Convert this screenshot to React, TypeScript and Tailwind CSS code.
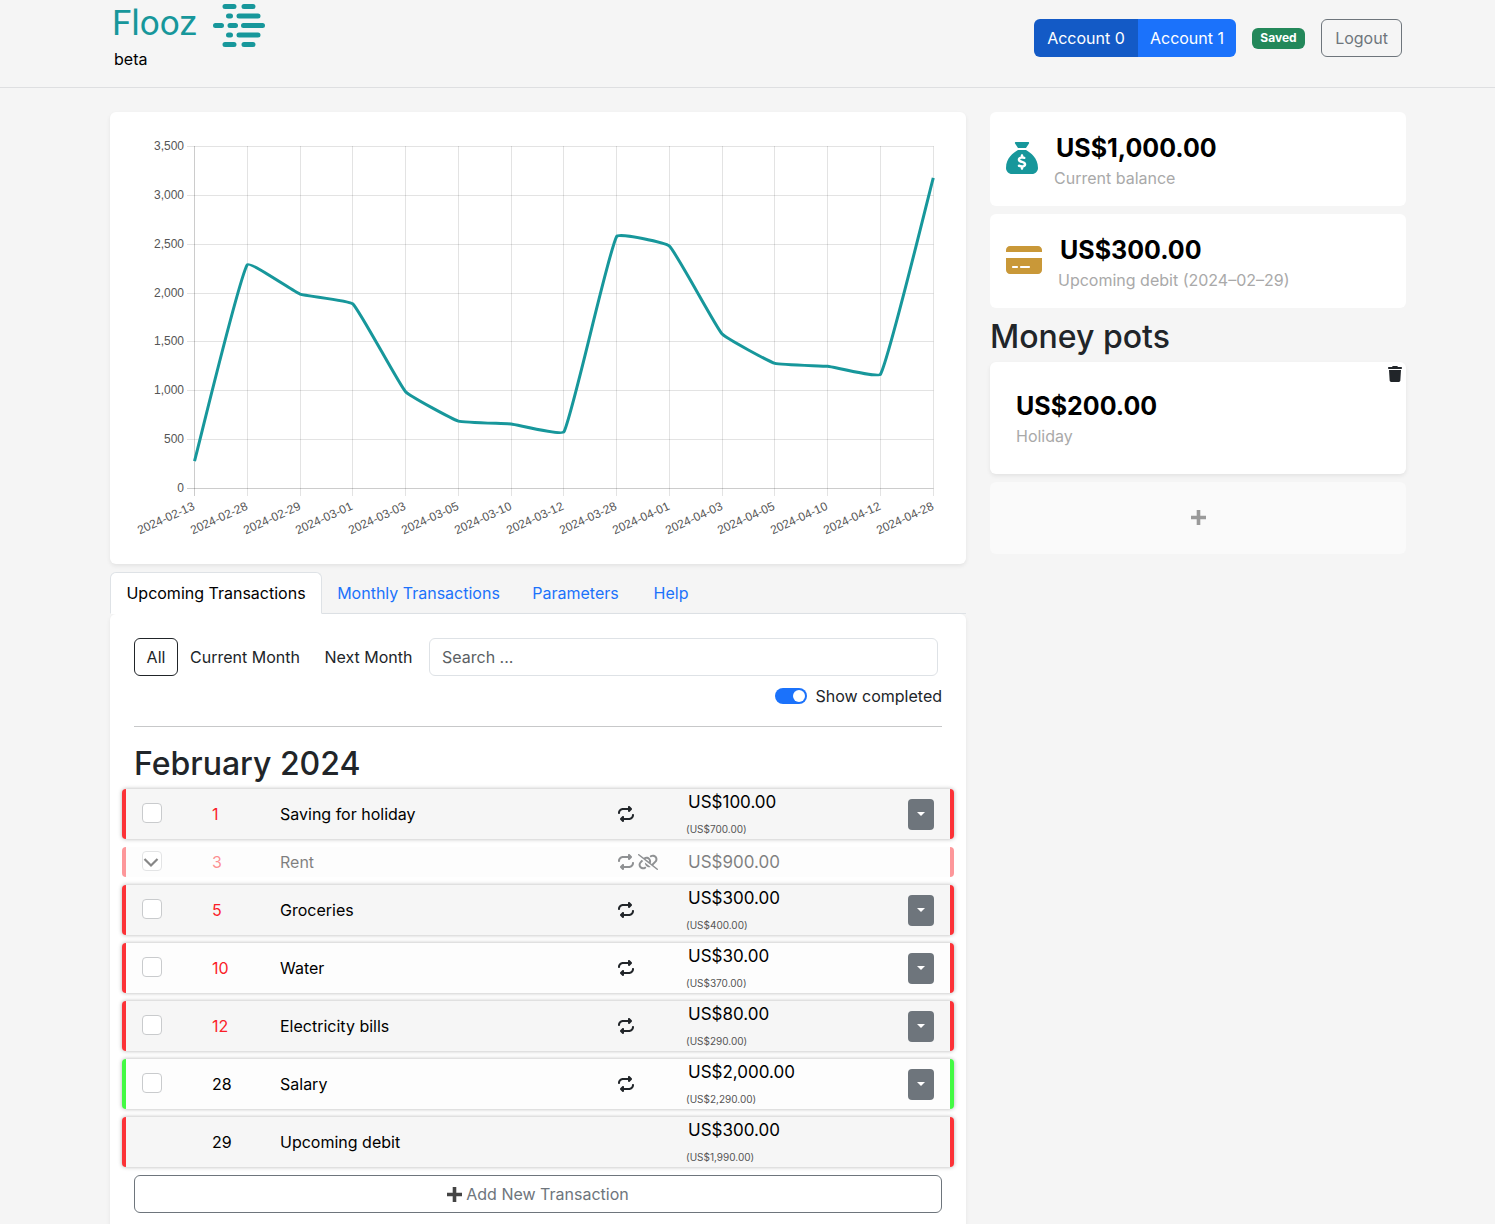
import { useState } from 'react'
import { FaCreditCard, FaLinkSlash, FaRepeat, FaSackDollar, FaTrash } from 'react-icons/fa6'

const points = [
  { date: '2024-02-13', balance: 280 },
  { date: '2024-02-28', balance: 2290 },
  { date: '2024-02-29', balance: 1990 },
  { date: '2024-03-01', balance: 1890 },
  { date: '2024-03-03', balance: 990 },
  { date: '2024-03-05', balance: 690 },
  { date: '2024-03-10', balance: 660 },
  { date: '2024-03-12', balance: 580 },
  { date: '2024-03-28', balance: 2580 },
  { date: '2024-04-01', balance: 2480 },
  { date: '2024-04-03', balance: 1580 },
  { date: '2024-04-05', balance: 1280 },
  { date: '2024-04-10', balance: 1250 },
  { date: '2024-04-12', balance: 1170 },
  { date: '2024-04-28', balance: 3180 },
]

type Transaction = {
  day: number
  name: string
  amount: string
  balance?: string
  late?: boolean
  income?: boolean
  completed?: boolean
  fixed?: boolean
}

const transactions: Transaction[] = [
  { day: 1, name: 'Saving for holiday', amount: 'US$100.00', balance: '(US$700.00)', late: true },
  { day: 3, name: 'Rent', amount: 'US$900.00', late: true, completed: true },
  { day: 5, name: 'Groceries', amount: 'US$300.00', balance: '(US$400.00)', late: true },
  { day: 10, name: 'Water', amount: 'US$30.00', balance: '(US$370.00)', late: true },
  { day: 12, name: 'Electricity bills', amount: 'US$80.00', balance: '(US$290.00)', late: true },
  { day: 28, name: 'Salary', amount: 'US$2,000.00', balance: '(US$2,290.00)', income: true },
  { day: 29, name: 'Upcoming debit', amount: 'US$300.00', balance: '(US$1,990.00)', fixed: true },
]

const tabs = [
  { label: 'Upcoming Transactions', width: 'w-[212px]' },
  { label: 'Monthly Transactions', width: 'w-[193px]' },
  { label: 'Parameters', width: 'w-[121px]' },
  { label: 'Help', width: 'w-[70px]' },
]

const filters = [
  { label: 'All', width: 'w-11' },
  { label: 'Current Month', width: 'w-[134px]' },
  { label: 'Next Month', width: 'w-[113px]' },
]

// ── Chart ─────────────────────────────────────────────

const LEFT = 60
const TOP = 10
const STEP = 52.77
const HEIGHT = 342
const MAX = 3500
const TENSION = 0.1

const xOf = (i: number) => LEFT + 0.5 + i * STEP
const yOf = (v: number) => TOP + 0.5 + HEIGHT * (1 - v / MAX)

// Cubic spline whose handles are weighted by the distance to each neighbour
function linePath() {
  const pts = points.map((p, i) => ({ x: xOf(i), y: yOf(p.balance) }))
  const handles = pts.map((cur, i) => {
    const prev = pts[Math.max(i - 1, 0)]
    const next = pts[Math.min(i + 1, pts.length - 1)]
    const a = Math.hypot(cur.x - prev.x, cur.y - prev.y)
    const b = Math.hypot(next.x - cur.x, next.y - cur.y)
    const fa = (TENSION * a) / (a + b)
    const fb = (TENSION * b) / (a + b)
    return {
      before: [cur.x - fa * (next.x - prev.x), cur.y - fa * (next.y - prev.y)],
      after: [cur.x + fb * (next.x - prev.x), cur.y + fb * (next.y - prev.y)],
    }
  })
  return pts
    .map((p, i) =>
      i === 0 ? `M${p.x},${p.y}` : `C${handles[i - 1].after} ${handles[i].before} ${p.x},${p.y}`,
    )
    .join(' ')
}

function BalanceChart() {
  const right = Math.round(xOf(points.length - 1) - 0.5) + 0.5
  return (
    <svg viewBox="0 0 808 404" className="w-full" role="img" aria-label="Balance forecast">
      {[0, 500, 1000, 1500, 2000, 2500, 3000, 3500].map((v) => {
        const y = Math.floor(yOf(v)) + 0.5
        return (
          <g key={v}>
            <line x1={LEFT - 7} x2={right} y1={y} y2={y} stroke="#000" strokeOpacity={v === 0 ? 0.2 : 0.11} />
            <text x={LEFT - 10} y={y + 3.5} textAnchor="end" fontSize="12" fill="#555">
              {v.toLocaleString('en-US')}
            </text>
          </g>
        )
      })}
      {points.map((p, i) => {
        const x = Math.round(xOf(i) - 0.5) + 0.5
        return (
          <g key={p.date}>
            <line x1={x} x2={x} y1={TOP} y2={TOP + HEIGHT + 8} stroke="#000" strokeOpacity={i === 0 ? 0.2 : 0.11} />
            <text transform={`translate(${x + 1} ${TOP + HEIGHT + 21}) rotate(-24.5)`} textAnchor="end" fontSize="12" fill="#555">
              {p.date}
            </text>
          </g>
        )
      })}
      <path d={linePath()} fill="none" stroke="#17979b" strokeWidth="3" />
    </svg>
  )
}

// ── Small drawings ────────────────────────────────────

function LogoMark() {
  return (
    <svg width="52" height="43" viewBox="0 0 52 43" stroke="#17979b" strokeWidth="5" strokeLinecap="round" aria-hidden>
      <path d="M12 2.500h9M31 2.500h9M15.500 12h2M26 12h19M2.500 21.500h6M17 21.500h5.500M30.500 21.500h19M15.500 31h2M26 31h19M12 40.500h9M31 40.500h9" />
    </svg>
  )
}

function PlusMark({ className }: { className: string }) {
  return (
    <svg width="15" height="15" viewBox="0 0 15 15" className={className} aria-hidden>
      <path d="M5.700 0h3.600v5.700H15v3.600H9.300V15H5.700V9.300H0V5.700h5.700z" fill="currentColor" />
    </svg>
  )
}

// ── Header ────────────────────────────────────────────

function Header() {
  return (
    <header className="flex h-[88px] items-start justify-between border-b border-[#dedfe1] pl-[112px] pr-[93px]">
      <div>
        <a href="#" className="flex items-start gap-4 pt-1">
          <span className="font-[Roboto,sans-serif] text-[35px] leading-10 text-[#17979b]">Flooz</span>
          <LogoMark />
        </a>
        <p className="pl-0.5 leading-6 text-black">beta</p>
      </div>
      <div className="flex items-center gap-4 pt-[19px]">
        <div className="flex h-[38px] overflow-hidden rounded-md text-white" role="group" aria-label="Accounts">
          <button className="w-[104px] bg-[#135ac6]">Account 0</button>
          <button className="w-[98px] bg-[#1b72fb]">Account 1</button>
        </div>
        <span className="flex h-[21px] w-[53px] items-center justify-center rounded-md bg-[#23885a] text-xs font-bold text-white">
          Saved
        </span>
        <button className="h-[38px] w-[81px] rounded-md border border-[#6e757c] text-[#6e757c]">Logout</button>
      </div>
    </header>
  )
}

// ── Transactions ──────────────────────────────────────

function TransactionRow({ item, striped }: { item: Transaction; striped: boolean }) {
  const edge = item.income ? 'border-[#43fa43]' : 'border-[#fc3237]'
  return (
    <tr
      className={`flex items-center rounded border-x-4 pl-4 pr-4 text-black ${edge} ${
        striped ? 'bg-[#f6f6f6]' : 'bg-[#fdfdfd]'
      } ${item.completed ? 'h-[30px] opacity-50' : 'h-[50px] shadow-[0_0_4px_rgba(0,0,0,0.3)]'}`}
    >
      <td className="w-[70px] shrink-0 pb-0.5">
        {!item.fixed && (
          <span className="relative block size-5">
            <input
              type="checkbox"
              defaultChecked={item.completed}
              aria-label={`${item.name} completed`}
              className="peer block size-5 appearance-none rounded border border-[#c9cbcd] bg-white"
            />
            <svg
              viewBox="0 0 20 20"
              className="pointer-events-none absolute inset-0 hidden peer-checked:block"
              fill="none"
              stroke="#111"
              strokeWidth="2.200"
              aria-hidden
            >
              <path d="M2.500 8l6.500 6.500L15.500 8" />
            </svg>
          </span>
        )}
      </td>
      <td className={`w-[68px] shrink-0 ${item.late ? 'text-[#fa1e28]' : ''}`}>{item.day}</td>
      <td className="flex-1">{item.name}</td>
      <td className="flex w-[70px] shrink-0 items-center gap-1 text-[#212529]">
        {!item.fixed && <FaRepeat size={16} aria-label="Monthly" />}
        {item.completed && <FaLinkSlash className="h-4 w-5" aria-label="Unlinked" />}
      </td>
      <td className="w-[220px] shrink-0">
        <span className="block text-[17px] leading-[26px]">{item.amount}</span>
        {item.balance && <span className="-ml-0.5 block pt-1 text-[10px] leading-5 text-[#555]">{item.balance}</span>}
      </td>
      <td className="w-[26px] shrink-0">
        {!item.fixed && !item.completed && (
          <button aria-label={`Options for ${item.name}`} className="flex h-[31px] w-[26px] items-center justify-center rounded bg-[#6e757c]">
            <svg width="8" height="4" viewBox="0 0 8 4" aria-hidden>
              <path d="M0 0h8L4 4z" fill="#fff" />
            </svg>
          </button>
        )}
      </td>
    </tr>
  )
}

function Transactions() {
  const [filter, setFilter] = useState('All')
  return (
    <section className="rounded-md bg-white px-6 pb-12 pt-6 shadow-[0_2px_4px_rgba(0,0,0,0.075)]">
      <div className="flex pr-1">
        {filters.map(({ label, width }) => (
          <button
            key={label}
            onClick={() => setFilter(label)}
            className={`h-[38px] shrink-0 rounded-md border ${width} ${
              filter === label ? 'border-[#212529]' : 'border-transparent'
            }`}
          >
            {label}
          </button>
        ))}
        <input
          type="search"
          aria-label="Search transactions"
          placeholder="Search ..."
          className="ml-1 h-[38px] min-w-0 flex-1 rounded-md border border-[#dee2e6] px-3 placeholder:text-[#5b5f63]"
        />
      </div>
      <label className="mt-2 flex items-center justify-end gap-2 leading-6">
        <input
          type="checkbox"
          role="switch"
          defaultChecked
          className="flex h-4 w-8 appearance-none items-center rounded-full bg-[#adb5bd] px-0.5 before:size-3 before:rounded-full before:bg-white checked:justify-end checked:bg-[#1b72fb]"
        />
        Show completed
      </label>
      <hr className="mb-4 mt-[18px] border-[#c7c8c9]" />
      <h2 className="mb-1 text-[32px] font-medium leading-[42px]">February 2024</h2>
      <table className="-mx-3 block">
        <tbody className="flex flex-col gap-2">
          {transactions.map((item, i) => (
            <TransactionRow key={item.day} item={item} striped={i % 2 === 0} />
          ))}
        </tbody>
      </table>
      <button className="mt-2 flex h-[38px] w-full items-center justify-center gap-1 rounded-md border border-[#6e757c] text-[#6e757c]">
        <PlusMark className="text-[#444]" />
        Add New Transaction
      </button>
    </section>
  )
}

// ── Sidebar ───────────────────────────────────────────

function Sidebar() {
  return (
    <aside>
      <div className="mb-2 flex h-[94px] gap-4 rounded-md bg-white px-4 pt-5">
        <FaSackDollar className="mt-2.5 size-8 text-[#17979b]" aria-hidden />
        <div>
          <p className="pl-0.5 text-[25px] font-bold leading-8 text-black">US$1,000.00</p>
          <p className="leading-7 text-[#a9a9a9]">Current balance</p>
        </div>
      </div>
      <div className="mb-2 flex h-[94px] gap-4 rounded-md bg-white px-4 pt-5">
        <FaCreditCard className="mt-2.5 h-8 w-9 text-[#c99838]" aria-hidden />
        <div>
          <p className="pl-0.5 text-[25px] font-bold leading-8 text-black">US$300.00</p>
          <p className="leading-7 text-[#a9a9a9]">Upcoming debit (2024–02–29)</p>
        </div>
      </div>
      <h2 className="mb-1 text-[32px] font-medium leading-[42px]">Money pots</h2>
      <div className="relative mb-2 h-28 rounded-md bg-white px-[26px] pt-7 shadow-[0_2px_4px_rgba(0,0,0,0.075)]">
        <button aria-label="Delete Holiday" className="absolute right-1 top-1">
          <FaTrash className="h-4 w-[14px]" />
        </button>
        <p className="text-[25px] font-bold leading-8 text-black">US$200.00</p>
        <p className="leading-7 text-[#a9a9a9]">Holiday</p>
      </div>
      <button aria-label="Add money pot" className="flex h-[72px] w-full items-center justify-center rounded-md bg-[#fafafa] pb-0.5">
        <PlusMark className="text-[#9a9a9a]" />
      </button>
    </aside>
  )
}

export default function App() {
  const [tab, setTab] = useState('Upcoming Transactions')
  return (
    <div className="min-h-screen bg-[#f5f5f5] font-[Inter,sans-serif] text-base text-[#212529]">
      <Header />
      <main className="grid grid-cols-[856fr_416fr] items-start gap-6 pl-[110px] pr-[89px] pt-6">
        <div className="min-w-0">
          <section className="mb-2 rounded-md bg-white p-6 font-['Liberation_Sans',sans-serif] shadow-[0_2px_4px_rgba(0,0,0,0.075)]">
            <BalanceChart />
          </section>
          <nav className="flex border-b border-[#dee2e6]">
            {tabs.map(({ label, width }) => (
              <button
                key={label}
                onClick={() => setTab(label)}
                className={`-mb-px h-[42px] rounded-t-md border ${width} ${
                  tab === label
                    ? 'border-[#dee2e6] border-b-white bg-white text-black'
                    : 'border-transparent text-[#1b72fb]'
                }`}
              >
                {label}
              </button>
            ))}
          </nav>
          <Transactions />
        </div>
        <Sidebar />
      </main>
    </div>
  )
}
